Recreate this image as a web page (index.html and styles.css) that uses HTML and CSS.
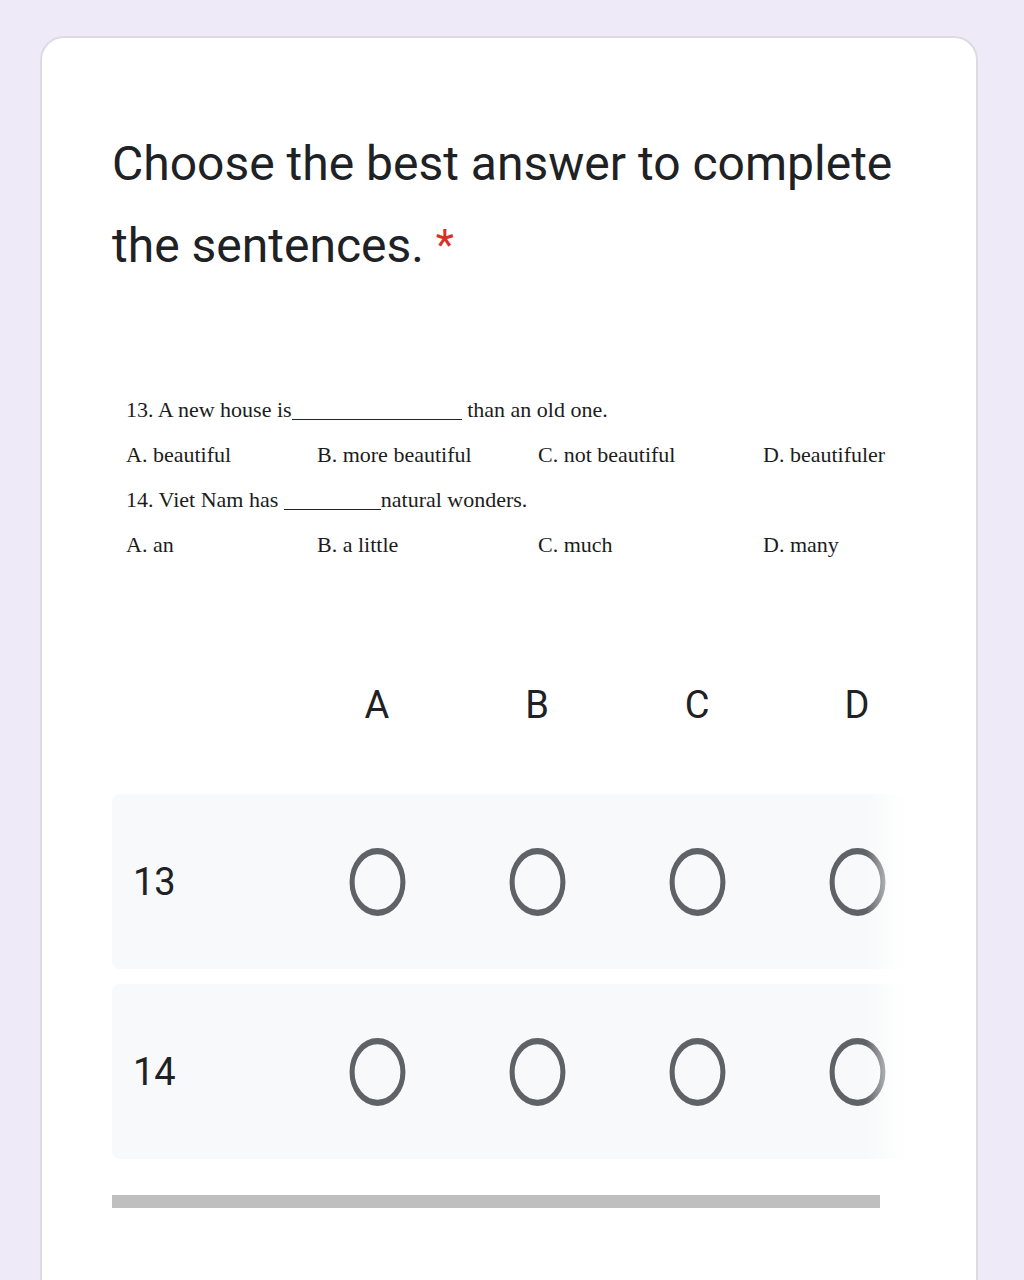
FILE: index.html
```html
<!DOCTYPE html>
<html lang="en">
<head>
    <meta charset="UTF-8">
    <meta name="viewport" content="width=device-width, initial-scale=1.0">
    <title>Choose the best answer</title>
    <link rel="stylesheet" href="styles.css">
</head>
<body>
    <div class="card">
        <h1 class="title">Choose the best answer to complete the sentences. <span class="req">*</span></h1>

        <div class="exam">
            <p class="exam-line">13. A new house is<span class="blank blank-long"></span> than an old one.</p>
            <div class="choices">
                <span>A. beautiful</span>
                <span>B. more beautiful</span>
                <span>C. not beautiful</span>
                <span>D. beautifuler</span>
            </div>
            <p class="exam-line">14. Viet Nam has <span class="blank blank-short"></span>natural wonders.</p>
            <div class="choices">
                <span>A. an</span>
                <span>B. a little</span>
                <span>C. much</span>
                <span>D. many</span>
            </div>
        </div>

        <div class="grid-wrap">
            <div class="grid">
                <div class="grid-head">
                    <span></span>
                    <span>A</span>
                    <span>B</span>
                    <span>C</span>
                    <span>D</span>
                </div>
                <div class="grid-row">
                    <span class="row-label">13</span>
                    <span class="radio"><svg viewBox="0 0 24 24" preserveAspectRatio="none"><circle cx="12" cy="12" r="10"/></svg></span>
                    <span class="radio"><svg viewBox="0 0 24 24" preserveAspectRatio="none"><circle cx="12" cy="12" r="10"/></svg></span>
                    <span class="radio"><svg viewBox="0 0 24 24" preserveAspectRatio="none"><circle cx="12" cy="12" r="10"/></svg></span>
                    <span class="radio"><svg viewBox="0 0 24 24" preserveAspectRatio="none"><circle cx="12" cy="12" r="10"/></svg></span>
                </div>
                <div class="grid-row">
                    <span class="row-label">14</span>
                    <span class="radio"><svg viewBox="0 0 24 24" preserveAspectRatio="none"><circle cx="12" cy="12" r="10"/></svg></span>
                    <span class="radio"><svg viewBox="0 0 24 24" preserveAspectRatio="none"><circle cx="12" cy="12" r="10"/></svg></span>
                    <span class="radio"><svg viewBox="0 0 24 24" preserveAspectRatio="none"><circle cx="12" cy="12" r="10"/></svg></span>
                    <span class="radio"><svg viewBox="0 0 24 24" preserveAspectRatio="none"><circle cx="12" cy="12" r="10"/></svg></span>
                </div>
            </div>
            <div class="fade"></div>
        </div>

        <div class="scrollbar"><div class="thumb"></div></div>
    </div>
</body>
</html>
```

FILE: styles.css
```css
body {
    margin: 0;
    height: 1280px;
    overflow: hidden;
    background: #eeeaf8;
    font-family: Roboto, "Liberation Sans", sans-serif;
    color: #202124;
}
.card {
    box-sizing: border-box;
    width: 938px;
    min-height: 1320px;
    margin: 36px 0 0 40px;
    padding: 85px 70px 0 70px;
    background: #fff;
    border: 2px solid #dcdbe2;
    border-radius: 24px;
}
.title {
    margin: 0;
    font-size: 48px;
    font-weight: 400;
    line-height: 82px;
    color: #202124;
}
.req {
    font-size: 42px;
    line-height: 1;
    vertical-align: 3px;
    color: #d93025;
}
.exam {
    margin-top: 100px;
    padding-left: 14px;
    font-family: "Liberation Serif", "Times New Roman", serif;
    font-size: 22px;
    line-height: 45px;
    color: #1c1c1c;
}
.exam-line {
    margin: 0;
    white-space: nowrap;
}
.choices {
    display: grid;
    grid-template-columns: 191px 221px 225px auto;
}
.blank {
    display: inline-block;
    border-bottom: 1px solid #222;
    vertical-align: -3px;
}
.blank-long {
    width: 170px;
}
.blank-short {
    width: 97px;
}
.grid-wrap {
    position: relative;
    margin-top: 88px;
    overflow: hidden;
}
.grid {
    width: 825px;
}
.grid-head,
.grid-row {
    display: grid;
    grid-template-columns: 185px repeat(4, 160px);
    align-items: center;
}
.grid-head {
    height: 100px;
    margin-bottom: 39px;
    font-size: 38px;
}
.grid-head span {
    text-align: center;
}
.grid-row {
    height: 175px;
    margin-bottom: 15px;
    background: #f8f9fa;
    border-radius: 8px;
}
.grid-row:last-child {
    margin-bottom: 0;
}
.row-label {
    padding-left: 21px;
    font-size: 38px;
}
.radio {
    display: flex;
    justify-content: center;
}
.radio svg {
    width: 61px;
    height: 74px;
    fill: none;
    stroke: #5f6368;
    stroke-width: 2;
}
.fade {
    position: absolute;
    top: 0;
    right: 0;
    bottom: 0;
    width: 40px;
    background: linear-gradient(to right, rgba(255, 255, 255, 0), #fff);
}
.scrollbar {
    margin-top: 36px;
    height: 13px;
}
.thumb {
    width: 768px;
    height: 13px;
    background: #bfbfbf;
}
```
